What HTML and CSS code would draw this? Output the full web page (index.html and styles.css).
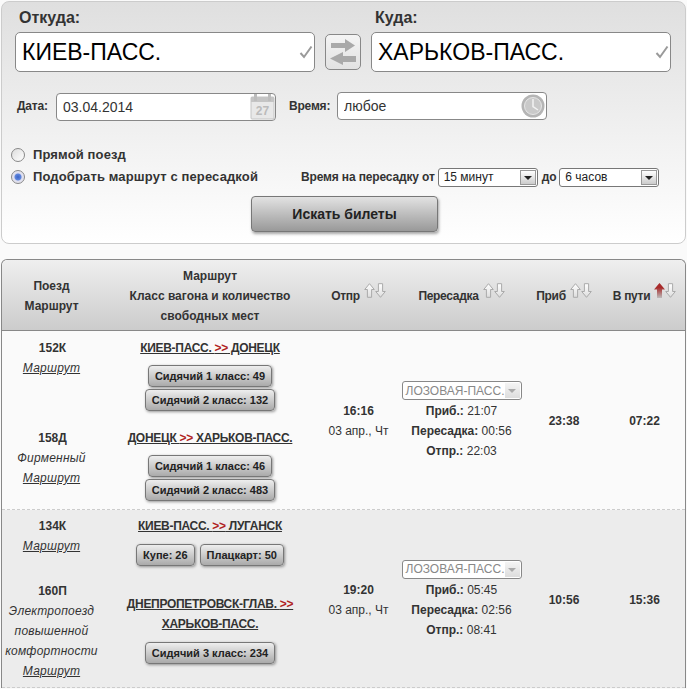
FILE: index.html
```html
<!DOCTYPE html>
<html lang="ru">
<head>
    <meta charset="UTF-8">
    <meta name="viewport" content="width=device-width, initial-scale=1.0">
    <title>Поиск билетов</title>
    <link rel="stylesheet" href="styles.css">
</head>
<body>
    <svg class="icon-defs" width="0" height="0">
        <defs>
            <linearGradient id="sort-idle" x1="0" y1="0" x2="0" y2="1">
                <stop offset="0" stop-color="#fff"/>
                <stop offset="1" stop-color="#ddd"/>
            </linearGradient>
            <linearGradient id="sort-active" x1="0" y1="0" x2="0" y2="1">
                <stop offset="0.3" stop-color="#a82a2a"/>
                <stop offset="1" stop-color="#bbb"/>
            </linearGradient>
            <symbol id="arrow-up" viewBox="0 0 11 15">
                <path d="M5.5 .7 10.3 6.5H7.6V14.3H3.4V6.5H.7Z" fill="url(#sort-idle)" stroke="#aaa"/>
            </symbol>
            <symbol id="arrow-down" viewBox="0 0 11 15">
                <path d="M5.5 14.3 10.3 8.5H7.6V.7H3.4V8.5H.7Z" fill="url(#sort-idle)" stroke="#aaa"/>
            </symbol>
            <symbol id="arrow-up-red" viewBox="0 0 11 15">
                <path d="M5.5 0 11 6.5H8V15H3V6.5H0Z" fill="url(#sort-active)"/>
            </symbol>
            <symbol id="check" viewBox="0 0 14 14">
                <path d="M1.5 8 5 12 12.5 1.5" fill="none" stroke="#9a9a9a" stroke-width="2"/>
            </symbol>
        </defs>
    </svg>

    <form class="search">
        <div class="stations">
            <div class="station">
                <label class="station-label">Откуда:</label>
                <div class="station-field">
                    <input class="station-input" type="text" value="КИЕВ-ПАСС.">
                    <svg class="check-icon"><use href="#check"/></svg>
                </div>
            </div>
            <button type="button" class="swap">
                <svg width="28" height="28" viewBox="0 0 28 28">
                    <path d="M2 5H16V1L26 7.5 16 14V10H2Z" fill="#a9a9a9"/>
                    <path d="M27 18H14V14L1 20.5 14 27V24H27Z" fill="#a9a9a9"/>
                </svg>
            </button>
            <div class="station">
                <label class="station-label">Куда:</label>
                <div class="station-field">
                    <input class="station-input" type="text" value="ХАРЬКОВ-ПАСС.">
                    <svg class="check-icon"><use href="#check"/></svg>
                </div>
            </div>
        </div>

        <div class="when">
            <label class="when-label">Дата:</label>
            <div class="when-field date-field">
                <input class="when-input" type="text" value="03.04.2014">
                <svg class="calendar-icon" width="25" height="26" viewBox="0 0 25 26">
                    <rect x="1" y="3" width="23" height="22" rx="1" fill="#e8e8e8" stroke="#c4c4c4"/>
                    <rect x="1" y="3" width="23" height="5" fill="#c4c4c4"/>
                    <rect x="4" y="0" width="3" height="7" fill="#bcbcbc"/>
                    <rect x="18" y="0" width="3" height="7" fill="#bcbcbc"/>
                    <text x="12.5" y="21" class="calendar-day">27</text>
                </svg>
            </div>
            <label class="when-label time-label">Время:</label>
            <div class="when-field time-field">
                <input class="when-input" type="text" value="любое">
                <svg class="clock-icon" width="24" height="24" viewBox="0 0 24 24">
                    <circle cx="12" cy="12" r="11.5" fill="#b5b5b5"/>
                    <circle cx="12" cy="12" r="8.5" fill="#c9c9c9" stroke="#e6e6e6"/>
                    <path d="M12 5V12.5L17 16" fill="none" stroke="#f2f2f2" stroke-width="1.5"/>
                </svg>
            </div>
        </div>

        <div class="route-type first">
            <input class="radio" type="radio" name="route" id="direct">
            <label class="radio-label" for="direct">Прямой поезд</label>
        </div>
        <div class="route-type">
            <input class="radio" type="radio" name="route" id="transfer" checked>
            <label class="radio-label" for="transfer">Подобрать маршрут с пересадкой</label>
            <div class="transfer-time">
                <span class="transfer-label">Время на пересадку от</span>
                <div class="dropdown"><span class="dropdown-text">15 минут</span><span class="dropdown-arrow"></span></div>
                <span class="transfer-label">до</span>
                <div class="dropdown"><span class="dropdown-text">6 часов</span><span class="dropdown-arrow"></span></div>
            </div>
        </div>

        <button type="button" class="search-btn">Искать билеты</button>
    </form>

    <div class="results">
        <div class="results-head">
            <div class="head-cell head-train">Поезд<br>Маршрут</div>
            <div class="head-cell">Маршрут<br>Класс вагона и количество<br>свободных мест</div>
            <div class="head-cell head-sort">Отпр<span class="sort"><svg><use href="#arrow-up"/></svg><svg><use href="#arrow-down"/></svg></span></div>
            <div class="head-cell head-sort">Пересадка<span class="sort"><svg><use href="#arrow-up"/></svg><svg><use href="#arrow-down"/></svg></span></div>
            <div class="head-cell head-sort">Приб<span class="sort"><svg><use href="#arrow-up"/></svg><svg><use href="#arrow-down"/></svg></span></div>
            <div class="head-cell head-sort">В пути<span class="sort"><svg><use href="#arrow-up-red"/></svg><svg><use href="#arrow-down"/></svg></span></div>
        </div>

        <div class="trip trip-light">
            <div class="legs">
                <div class="leg">
                    <div class="train">
                        <b>152К</b>
                        <a class="train-route" href="#">Маршрут</a>
                    </div>
                    <div class="route">
                        <a class="route-link" href="#">КИЕВ-ПАСС. <em>&gt;&gt;</em> ДОНЕЦК</a>
                        <div class="seats">
                            <button type="button" class="seat-btn">Сидячий 1 класс: 49</button>
                            <button type="button" class="seat-btn">Сидячий 2 класс: 132</button>
                        </div>
                    </div>
                </div>
                <div class="leg">
                    <div class="train">
                        <b>158Д</b>
                        <i>Фирменный</i>
                        <a class="train-route" href="#">Маршрут</a>
                    </div>
                    <div class="route">
                        <a class="route-link" href="#">ДОНЕЦК <em>&gt;&gt;</em> ХАРЬКОВ-ПАСС.</a>
                        <div class="seats">
                            <button type="button" class="seat-btn">Сидячий 1 класс: 46</button>
                            <button type="button" class="seat-btn">Сидячий 2 класс: 483</button>
                        </div>
                    </div>
                </div>
            </div>
            <div class="cell"><b>16:16</b>03 апр., Чт</div>
            <div class="cell">
                <div class="stop-select"><span class="stop-text">ЛОЗОВАЯ-ПАСС.</span><span class="stop-arrow"></span></div>
                <div class="stop-line"><b>Приб.:</b> 21:07</div>
                <div class="stop-line"><b>Пересадка:</b> 00:56</div>
                <div class="stop-line"><b>Отпр.:</b> 22:03</div>
            </div>
            <div class="cell"><b>23:38</b></div>
            <div class="cell"><b>07:22</b></div>
        </div>

        <div class="trip trip-dark">
            <div class="legs">
                <div class="leg">
                    <div class="train">
                        <b>134К</b>
                        <a class="train-route" href="#">Маршрут</a>
                    </div>
                    <div class="route">
                        <a class="route-link" href="#">КИЕВ-ПАСС. <em>&gt;&gt;</em> ЛУГАНСК</a>
                        <div class="seats seats-inline">
                            <button type="button" class="seat-btn">Купе: 26</button>
                            <button type="button" class="seat-btn">Плацкарт: 50</button>
                        </div>
                    </div>
                </div>
                <div class="leg">
                    <div class="train">
                        <b>160П</b>
                        <i>Электропоезд повышенной комфортности</i>
                        <a class="train-route" href="#">Маршрут</a>
                    </div>
                    <div class="route route-tall">
                        <a class="route-link" href="#">ДНЕПРОПЕТРОВСК-ГЛАВ. <em>&gt;&gt;</em> ХАРЬКОВ-ПАСС.</a>
                        <div class="seats">
                            <button type="button" class="seat-btn">Сидячий 3 класс: 234</button>
                        </div>
                    </div>
                </div>
            </div>
            <div class="cell"><b>19:20</b>03 апр., Чт</div>
            <div class="cell">
                <div class="stop-select"><span class="stop-text">ЛОЗОВАЯ-ПАСС.</span><span class="stop-arrow"></span></div>
                <div class="stop-line"><b>Приб.:</b> 05:45</div>
                <div class="stop-line"><b>Пересадка:</b> 02:56</div>
                <div class="stop-line"><b>Отпр.:</b> 08:41</div>
            </div>
            <div class="cell"><b>10:56</b></div>
            <div class="cell"><b>15:36</b></div>
        </div>
    </div>
</body>
</html>
```

FILE: styles.css
```css
* {
    box-sizing: border-box;
}
body {
    margin: 0;
    padding: 1px;
    background-color: #fafafa;
    color: #333;
    font-family: "Liberation Sans", Arial, sans-serif;
    font-size: 12px;
    line-height: 20px;
}
.icon-defs {
    position: absolute;
}

/* search form */
.search {
    height: 243px;
    padding: 6px 0 0 13px;
    border: 1px solid #ccc;
    border-radius: 8px;
    background: linear-gradient(#dfdfdf, #fff);
}
.stations {
    display: flex;
}
.station {
    width: 300px;
}
.station-label {
    display: block;
    height: 24px;
    padding-left: 4px;
    font-size: 16px;
    font-weight: bold;
}
.station-field {
    display: flex;
    align-items: center;
    height: 40px;
    padding: 0 1px 0 6px;
    border: 1px solid #888;
    border-radius: 5px;
    background-color: #fff;
}
.station-input {
    flex: 1;
    min-width: 0;
    padding: 0;
    border: none;
    outline: none;
    background: transparent;
    color: #000;
    font-family: inherit;
    font-size: 23px;
}
.check-icon {
    width: 14px;
    height: 14px;
}
.swap {
    width: 36px;
    height: 36px;
    margin: 26px 10px 0;
    padding: 3px;
    border: 1px solid #888;
    border-radius: 5px;
    background: linear-gradient(#f4f4f4, #e2e2e2);
}
.swap svg {
    display: block;
}

.when {
    display: flex;
    align-items: center;
    height: 28px;
    margin-top: 20px;
}
.when-label {
    width: 39px;
    margin-left: 2px;
    font-weight: bold;
    letter-spacing: -0.2px;
}
.time-label {
    width: 48px;
    margin-left: 13px;
}
.when-field {
    display: flex;
    align-items: center;
    height: 28px;
    border: 1px solid #888;
    border-radius: 4px;
    background-color: #fff;
}
.date-field {
    width: 220px;
    margin-top: 1px;
    padding-left: 6px;
}
.time-field {
    width: 210px;
    padding-left: 6px;
}
.when-input {
    flex: 1;
    min-width: 0;
    padding: 0;
    border: none;
    outline: none;
    background: transparent;
    color: #333;
    font-family: inherit;
    font-size: 14px;
}
.calendar-day {
    fill: #bbb;
    font-size: 12px;
    font-weight: bold;
    text-anchor: middle;
}
.clock-icon {
    margin-right: 1px;
}

.route-type {
    display: flex;
    align-items: center;
    height: 20px;
    margin-left: -4px;
}
.route-type.first {
    height: 22px;
    margin-top: 25px;
    padding-bottom: 2px;
}
.radio {
    appearance: none;
    flex: none;
    width: 14px;
    height: 14px;
    margin: 0 8px 0 0;
    border: 1px solid #888;
    border-radius: 50%;
    background: linear-gradient(135deg, #ddd, #fff);
}
.radio:checked {
    background: radial-gradient(circle, #3a63c8 0, #5f86dc 3px, #dde 4px, #eee);
}
.radio-label {
    font-size: 13px;
    font-weight: bold;
    letter-spacing: 0.13px;
}
.transfer-time {
    display: flex;
    align-items: center;
    gap: 3px;
    margin-left: 43px;
    font-weight: bold;
}
.transfer-label {
    letter-spacing: -0.15px;
}
.dropdown + .transfer-label {
    margin-left: 1px;
}
.dropdown {
    display: flex;
    align-items: center;
    justify-content: space-between;
    width: 100px;
    height: 19px;
    padding: 0 1px 0 5px;
    border: 1px solid #777;
    border-radius: 3px;
    background-color: #fff;
    color: #222;
    font-weight: normal;
}
.dropdown-arrow {
    width: 16px;
    height: 15px;
    border: 1px solid #999;
    background: linear-gradient(#fff, #ccc);
    position: relative;
}
.dropdown-arrow::after {
    content: "";
    position: absolute;
    left: 3px;
    top: 5px;
    border: 4px solid transparent;
    border-top-color: #222;
    border-bottom: none;
}
.search-btn {
    display: block;
    width: 187px;
    height: 36px;
    margin: 9px 0 0 236px;
    border: 1px solid #777;
    border-radius: 4px;
    background: linear-gradient(#e2e2e2, #999);
    box-shadow: 1px 2px 3px rgba(0, 0, 0, 0.35);
    color: #222;
    font-family: inherit;
    font-size: 14px;
    font-weight: bold;
}

/* results */
.results {
    margin-top: 15px;
    border: 1px solid #888;
    border-bottom: none;
    border-radius: 6px 6px 0 0;
    width: 685px;
}
.results-head {
    display: grid;
    grid-template-columns: 101px 214px 83px 123px 82px 79px;
    align-items: center;
    height: 71px;
    padding-top: 1px;
    border-bottom: 1px solid #888;
    border-radius: 6px 6px 0 0;
    background: linear-gradient(#efefef, #ccc);
    font-weight: bold;
    text-align: center;
}
.head-cell {
    white-space: nowrap;
}
.head-train {
    padding-right: 2px;
}
.head-sort {
    padding-bottom: 2px;
    letter-spacing: -0.3px;
}
.sort {
    display: inline-block;
    height: 15px;
    margin-left: 4px;
    vertical-align: 2px;
}
.sort svg {
    width: 11px;
    height: 15px;
}

.trip {
    display: grid;
    grid-template-columns: 315px 83px 123px 82px 79px;
    align-items: center;
    height: 178px;
    border-bottom: 1px dashed #ccc;
    text-align: center;
}
.trip-light {
    height: 179px;
    background-color: #fafafa;
}
.trip-dark {
    background-color: #ececec;
}
.legs {
    align-self: start;
    padding-top: 7px;
}
.trip-dark .legs {
    padding-top: 6px;
}
.leg {
    display: grid;
    grid-template-columns: 101px 214px;
    align-items: start;
}
.leg + .leg {
    margin-top: 17px;
}
.trip-dark .leg + .leg {
    margin-top: 15px;
}
.train b,
.train i,
.train-route {
    display: block;
}
.train i,
.train-route {
    padding-right: 2px;
    letter-spacing: 0.22px;
}
.train-route {
    color: #333;
    font-style: italic;
}
.route-link {
    color: #333;
    font-weight: bold;
    letter-spacing: -0.3px;
}
.route-link em {
    color: #b02222;
    font-style: normal;
}
.route-tall {
    margin-top: 13px;
    padding: 0 20px;
}
.seats {
    display: flex;
    flex-direction: column;
    align-items: center;
    gap: 2px;
    margin-top: 7px;
}
.trip-dark .seats {
    margin-top: 8px;
}
.trip-dark .seats-inline {
    flex-direction: row;
    justify-content: center;
    gap: 5px;
}
.seat-btn {
    height: 22px;
    padding: 0 6px;
    border: 1px solid #777;
    border-radius: 4px;
    background: linear-gradient(#eee, #aaa);
    box-shadow: 1px 1px 3px rgba(0, 0, 0, 0.4);
    color: #222;
    font-family: inherit;
    font-size: 11px;
    font-weight: bold;
}
.cell {
    padding-top: 2px;
}
.cell b {
    display: block;
}
.stop-line b {
    display: inline;
}
.stop-select {
    display: flex;
    align-items: center;
    justify-content: space-between;
    width: 120px;
    height: 19px;
    margin: 0 auto 1px;
    padding: 0 1px 0 3px;
    border: 1px solid #888;
    border-radius: 3px;
    background-color: #fff;
    color: #888;
}
.stop-text {
    white-space: nowrap;
}
.stop-arrow {
    flex: none;
    position: relative;
    width: 15px;
    height: 15px;
    background: linear-gradient(#f4f4f4, #ddd);
}
.stop-arrow::after {
    content: "";
    position: absolute;
    left: 3px;
    top: 6px;
    border: 4px solid transparent;
    border-top-color: #aaa;
    border-bottom: none;
}
```
